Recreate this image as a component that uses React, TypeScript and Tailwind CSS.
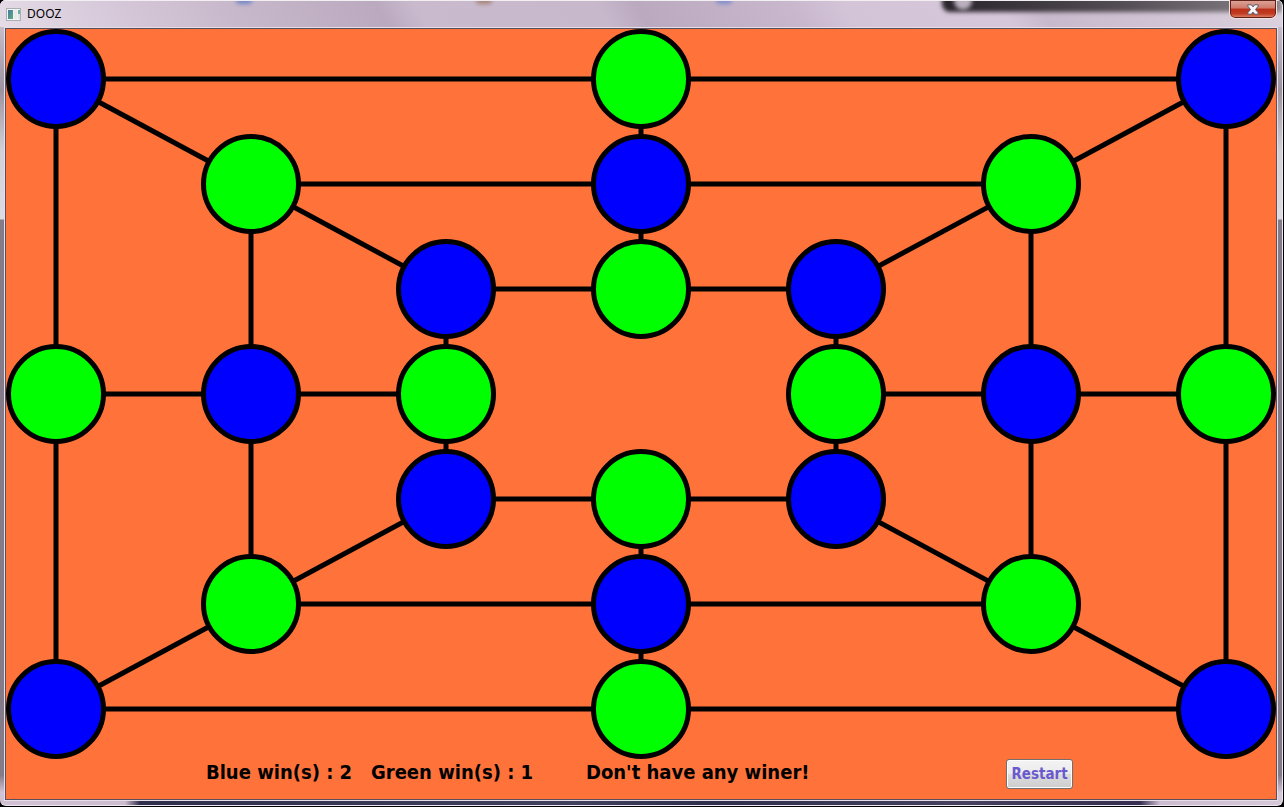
import React from "react";

const BLUE = "#0000ff";
const GREEN = "#00ff00";

const columns = [50, 245, 440, 635, 830, 1025, 1220];
const rows = [50, 155, 260, 365, 470, 575, 680];

type Piece = { col: number; row: number; color: string };

const pieces: Piece[] = [
  { col: 0, row: 0, color: BLUE },
  { col: 3, row: 0, color: GREEN },
  { col: 6, row: 0, color: BLUE },
  { col: 1, row: 1, color: GREEN },
  { col: 3, row: 1, color: BLUE },
  { col: 5, row: 1, color: GREEN },
  { col: 2, row: 2, color: BLUE },
  { col: 3, row: 2, color: GREEN },
  { col: 4, row: 2, color: BLUE },
  { col: 0, row: 3, color: GREEN },
  { col: 1, row: 3, color: BLUE },
  { col: 2, row: 3, color: GREEN },
  { col: 4, row: 3, color: GREEN },
  { col: 5, row: 3, color: BLUE },
  { col: 6, row: 3, color: GREEN },
  { col: 2, row: 4, color: BLUE },
  { col: 3, row: 4, color: GREEN },
  { col: 4, row: 4, color: BLUE },
  { col: 1, row: 5, color: GREEN },
  { col: 3, row: 5, color: BLUE },
  { col: 5, row: 5, color: GREEN },
  { col: 0, row: 6, color: BLUE },
  { col: 3, row: 6, color: GREEN },
  { col: 6, row: 6, color: BLUE },
];

// Each entry is [fromCol, fromRow, toCol, toRow].
const connectors = [
  [3, 0, 3, 2],
  [3, 4, 3, 6],
  [0, 3, 2, 3],
  [4, 3, 6, 3],
  [0, 0, 2, 2],
  [6, 0, 4, 2],
  [0, 6, 2, 4],
  [6, 6, 4, 4],
];

function Board() {
  return (
    <svg viewBox="0 0 1270 730" className="block w-full" role="img" aria-label="Board">
      <g stroke="#000" strokeWidth="5" fill="none">
        {[0, 1, 2].map((ring) => (
          <rect
            key={ring}
            x={columns[ring]}
            y={rows[ring]}
            width={columns[6 - ring] - columns[ring]}
            height={rows[6 - ring] - rows[ring]}
          />
        ))}
        {connectors.map(([c1, r1, c2, r2]) => (
          <line key={`${c1}${r1}${c2}${r2}`} x1={columns[c1]} y1={rows[r1]} x2={columns[c2]} y2={rows[r2]} />
        ))}
        {pieces.map(({ col, row, color }) => (
          <circle key={`${col}-${row}`} cx={columns[col]} cy={rows[row]} r="47.5" fill={color} />
        ))}
      </g>
    </svg>
  );
}

function WindowIcon() {
  return (
    <svg width="15" height="13" viewBox="0 0 15 13" aria-hidden="true">
      <defs>
        <linearGradient id="pane" x1="0" y1="0" x2="1" y2="1">
          <stop offset="0" stopColor="#4a78a8" />
          <stop offset="1" stopColor="#58b078" />
        </linearGradient>
      </defs>
      <rect x="0.5" y="0.5" width="14" height="12" fill="#f4f4f4" stroke="#a9afb4" />
      <rect x="2" y="2" width="5" height="9" fill="url(#pane)" />
      <rect x="8" y="2" width="3" height="9" fill="#e8eaec" />
      <rect x="12" y="2" width="2" height="4" fill="#6fae9c" />
      <rect x="12" y="6" width="2" height="5" fill="#dfe5e3" />
    </svg>
  );
}

function TitleBar() {
  return (
    <header className="relative flex h-[27px] items-start justify-between overflow-hidden bg-[linear-gradient(60deg,#e5dce6_0%,#d8cbdb_8%,#c9b9cc_18%,#bbaabf_30%,#cabace_33%,#c8b8cc_47%,#bbaabf_50%,#c9b8cd_62%,#d4c4d8_66%,#d6c7da_78%,#c9b9cc_81%,#d3c6d6_92%,#dcd2df_100%)]">
      <div className="absolute -top-1 right-0 h-4 w-[340px] rounded-bl-lg bg-linear-to-r from-[#29242b] via-[#514a52] to-[#898489] blur-[2px]" />
      <div className="absolute -top-2 right-[310px] size-[18px] rounded-full bg-[#bcb0bf] blur-[2px]" />
      <div className="absolute -top-1 left-[236px] h-2 w-4 rounded-full bg-[#7287c6] blur-[2px]" />
      <div className="absolute -top-1 left-[476px] h-2 w-4 rounded-full bg-[#a58478] blur-[2px]" />
      <div className="absolute -top-1 left-[716px] h-2 w-4 rounded-full bg-[#7f8dcc] blur-[2px]" />
      <div className="absolute inset-x-0 top-0 h-px bg-[#f1eff2]" />
      <div className="relative flex items-center gap-1.5 pt-1 pl-1.5">
        <WindowIcon />
        <h1 className="font-['Noto_Sans','Open_Sans',sans-serif] text-xs leading-5 text-black">DOOZ</h1>
      </div>
      <button
        type="button"
        aria-label="Close"
        className="relative mr-[5px] flex h-[19px] w-12 items-center justify-center rounded-b-md border border-t-0 border-[#f3dedb] bg-[linear-gradient(#dda69b_0%,#cf7a69_45%,#b93018_50%,#c23a20_75%,#df8b70_100%)] shadow-[inset_0_0_0_1px_#5e2119]"
      >
        <svg width="12" height="11" viewBox="0 0 12 11" aria-hidden="true">
          <path
            d="M0.8 0.8h3.6L6 2.9 7.6 0.8h3.6v1.4L8.5 5.5l2.7 3.3v1.4H7.6L6 8.1l-1.6 2.1H0.8V8.8l2.7-3.3L0.8 2.2z"
            fill="#f5f5f5"
            stroke="#565a6c"
            strokeWidth="1"
            strokeLinejoin="round"
          />
        </svg>
      </button>
    </header>
  );
}

export default function App() {
  return (
    <div className="flex min-h-screen flex-col bg-black">
      <div className="mr-px mb-px flex grow flex-col overflow-hidden rounded-md border-r border-b border-[#eee8f0] bg-[linear-gradient(#d9cddc_0px,#9d929f_90px,#d3cfd5_150px,#dedbe0_219px,#857a88_220px,#857a88_775px,#d2c0d5_792px,transparent_793px),linear-gradient(90deg,#d2c0d5_0px,#cdbbd0_125px,#302e4d_140px,#41405f_45%,#302e4d_55%,#45415f_75%,#352e50_1140px,#cdbbd0_1160px,#d6c8d9_100%)]">
        <TitleBar />
        <div className="mx-1 mb-1 flex grow flex-col border border-[#e6dfe8]">
          <main className="flex grow flex-col border border-[#57505c] bg-[#ff723a]">
            <Board />
            <footer className="grid grid-cols-[165px_215px_420px_auto] items-start justify-start pb-2.5 pl-[200px] font-['DejaVu_Sans_Condensed','DejaVu_Sans',sans-serif] text-xl font-bold leading-[26px] text-black">
              <p className="whitespace-nowrap">Blue win(s) : 2</p>
              <p className="whitespace-nowrap">Green win(s) : 1</p>
              <p className="whitespace-nowrap">Don't have any winer!</p>
              <button
                type="button"
                className="h-[30px] w-[67px] rounded-[3px] border border-[#707070] bg-[linear-gradient(#f3f3f3_0%,#ebebeb_50%,#dddddd_50%,#cdcdcd_100%)] text-[15px] leading-5 text-[#6a5acd] shadow-[inset_0_0_0_1px_#fcfcfc]"
              >
                Restart
              </button>
            </footer>
          </main>
        </div>
      </div>
    </div>
  );
}
